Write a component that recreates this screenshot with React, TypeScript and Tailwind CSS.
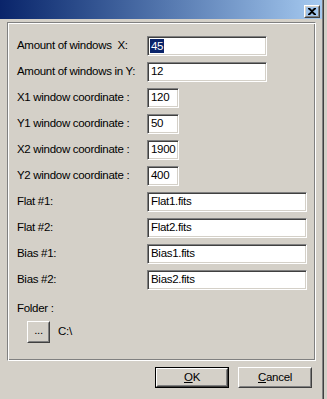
import type { ReactNode } from 'react'

const font = { fontFamily: '"Liberation Sans", Arial, sans-serif' }

interface Field {
  label: string
  value: string
  width: string
  selected?: boolean
}

const fields: Field[] = [
  { label: 'Amount of windows  X:', value: '45', width: 'w-[120px]', selected: true },
  { label: 'Amount of windows in Y:', value: '12', width: 'w-[120px]' },
  { label: 'X1 window coordinate :', value: '120', width: 'w-[32px]' },
  { label: 'Y1 window coordinate :', value: '50', width: 'w-[32px]' },
  { label: 'X2 window coordinate :', value: '1900', width: 'w-[32px]' },
  { label: 'Y2 window coordinate :', value: '400', width: 'w-[32px]' },
  { label: 'Flat #1:', value: 'Flat1.fits', width: 'w-[160px]' },
  { label: 'Flat #2:', value: 'Flat2.fits', width: 'w-[160px]' },
  { label: 'Bias #1:', value: 'Bias1.fits', width: 'w-[160px]' },
  { label: 'Bias #2:', value: 'Bias2.fits', width: 'w-[160px]' },
]

function Raised({ className, children }: { className: string; children: ReactNode }) {
  return (
    <div className={`border border-t-white border-l-white border-b-[#404040] border-r-[#404040] ${className}`}>
      <div className="w-full h-full flex items-center justify-center border border-t-[#d4d0c8] border-l-[#d4d0c8] border-b-[#808080] border-r-[#808080]">
        {children}
      </div>
    </div>
  )
}

function TextBox({ value, width, selected }: { value: string; width: string; selected?: boolean }) {
  return (
    <div
      className={`${width} h-[20px] bg-white border border-t-[#808080] border-l-[#808080] border-b-white border-r-white shadow-[inset_1px_1px_0_#404040,inset_-1px_-1px_0_#d4d0c8] flex items-center pl-[2px] overflow-hidden whitespace-nowrap`}
    >
      {selected ? (
        <span className="bg-[#0a246a] text-white leading-[14px] px-px">{value}</span>
      ) : (
        <span className="text-black pl-px">{value}</span>
      )}
    </div>
  )
}

export default function App() {
  return (
    <div
      className="w-[327px] h-[399px] bg-[#d4d0c8] flex text-[11.5px] tracking-[-0.3px] text-black overflow-hidden"
      style={font}
    >
      <div className="w-[322px] flex flex-col">
        <div className="h-[19px] bg-gradient-to-r from-[#0a246a] to-[#a6caf0] flex items-start justify-end pr-[2px] pt-[5px]">
          <Raised className="w-[16px] h-[13px]">
            <svg width="8" height="7" viewBox="0 0 8 7">
              <path d="M0 0h2l2 2 2-2h2v1L5 3.5 8 6v1H6L4 5 2 7H0V6l3-2.5L0 1z" fill="#000" />
            </svg>
          </Raised>
        </div>

        <div className="pl-[7px] pt-[3px]">
          <div className="w-[309px] h-[339px] border border-t-[#808080] border-l-[#808080] border-b-white border-r-white shadow-[inset_1px_1px_0_#ffffff,inset_-1px_-1px_0_#808080] pt-[13px] pl-[9px]">
            <div className="flex flex-col gap-[6px]">
              {fields.map((f) => (
                <div key={f.label} className="flex items-center h-[20px]">
                  <span className="w-[130px] whitespace-pre">{f.label}</span>
                  <TextBox value={f.value} width={f.width} selected={f.selected} />
                </div>
              ))}
            </div>
            <div className="mt-[11px] leading-[14px]">Folder :</div>
            <div className="flex items-center mt-[6px] pl-[10px]">
              <Raised className="w-[23px] h-[22px]">
                <span className="leading-none pb-[2px]">...</span>
              </Raised>
              <span className="ml-[8px]">C:\</span>
            </div>
          </div>
        </div>

        <div className="flex justify-end gap-[9px] pr-[10px] mt-[6px]">
          <div className="w-[74px] h-[21px] border border-black">
            <Raised className="w-full h-full">
              <span>
                <span className="underline">O</span>K
              </span>
            </Raised>
          </div>
          <Raised className="w-[74px] h-[21px]">
            <span>
              <span className="underline">C</span>ancel
            </span>
          </Raised>
        </div>
      </div>
      <div className="w-[2px] h-full border-l border-l-[#808080] border-r border-r-[#404040]" />
      <div className="flex-1 h-full bg-[#d4d0c8]" />
    </div>
  )
}
